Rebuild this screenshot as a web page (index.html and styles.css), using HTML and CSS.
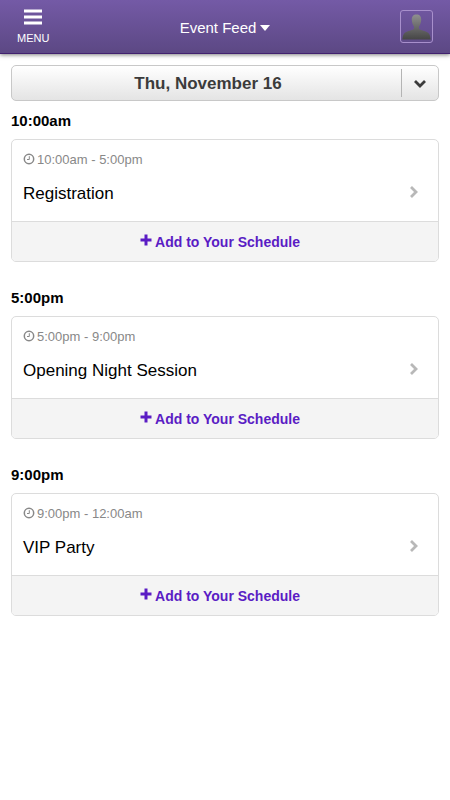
FILE: index.html
```html
<!DOCTYPE html>
<html lang="en">
<head>
<meta charset="utf-8">
<meta name="viewport" content="width=device-width, initial-scale=1">
<title>Event Feed</title>
<link rel="stylesheet" href="styles.css">
</head>
<body>
<svg class="sprite" aria-hidden="true">
  <symbol id="clock" viewBox="0 0 12 12">
    <circle cx="6" cy="6" r="4.7" fill="none" stroke="currentColor" stroke-width="1.5"/>
    <path d="M6.3 3.2V6.5H4" fill="none" stroke="currentColor" stroke-width="1"/>
  </symbol>
  <symbol id="plus" viewBox="0 0 12 12">
    <path d="M6 .5V11.5M.5 6H11.5" fill="none" stroke="currentColor" stroke-width="3"/>
  </symbol>
  <symbol id="chevron" viewBox="0 0 10 14">
    <path d="M2 2L7 7L2 12" fill="none" stroke="currentColor" stroke-width="2.8"/>
  </symbol>
</svg>

<header class="topbar">
  <button class="menu" type="button">
    <svg class="menu-icon" viewBox="0 0 18 16" aria-hidden="true">
      <path d="M0 2H18M0 8H18M0 14H18" stroke="#fff" stroke-width="3"/>
    </svg>
    <span>MENU</span>
  </button>
  <button class="feed" type="button">Event Feed
    <svg class="caret" viewBox="0 0 10 6" aria-hidden="true"><path d="M0 0H10L5 6Z" fill="#fff"/></svg>
  </button>
  <button class="profile" type="button" aria-label="Profile">
    <svg class="avatar" viewBox="0 0 29 29" aria-hidden="true">
      <defs>
        <linearGradient id="shade" x1="0" y1="3" x2="0" y2="28" gradientUnits="userSpaceOnUse">
          <stop offset="0" stop-color="#8e8e8e"/>
          <stop offset="1" stop-color="#444"/>
        </linearGradient>
      </defs>
      <path d="M14.5 2.500C11.300 2.500 9.600 4.500 9.800 8C10 10.800 10.800 13 12 14.500V16.500C11.500 18.500 4 18.500 1.800 22Q.3 24.200.3 27.500H28.700Q28.700 24.200 27.200 22C25 18.500 17.500 18.500 17 16.500V14.500C18.200 13 19 10.800 19.200 8C19.400 4.500 17.700 2.500 14.500 2.500Z" fill="url(#shade)"/>
    </svg>
  </button>
</header>

<main class="schedule">
  <div class="day">
    <select class="day-select" aria-label="Day">
      <option>Thu, November 16</option>
    </select>
    <span class="day-arrow">
      <svg viewBox="0 0 12 8" aria-hidden="true"><path d="M1 1L6 6L11 1" fill="none" stroke="#3b3b3b" stroke-width="2.800"/></svg>
    </span>
  </div>

  <section class="slot">
    <h2>10:00am</h2>
    <article class="card">
      <a class="event" href="#registration">
        <span class="details">
          <span class="time"><svg aria-hidden="true"><use href="#clock"/></svg>10:00am - 5:00pm</span>
          <span class="title">Registration</span>
        </span>
        <svg class="next" aria-hidden="true"><use href="#chevron"/></svg>
      </a>
      <button class="add" type="button"><svg aria-hidden="true"><use href="#plus"/></svg>Add to Your Schedule</button>
    </article>
  </section>

  <section class="slot">
    <h2>5:00pm</h2>
    <article class="card">
      <a class="event" href="#opening">
        <span class="details">
          <span class="time"><svg aria-hidden="true"><use href="#clock"/></svg>5:00pm - 9:00pm</span>
          <span class="title">Opening Night Session</span>
        </span>
        <svg class="next" aria-hidden="true"><use href="#chevron"/></svg>
      </a>
      <button class="add" type="button"><svg aria-hidden="true"><use href="#plus"/></svg>Add to Your Schedule</button>
    </article>
  </section>

  <section class="slot">
    <h2>9:00pm</h2>
    <article class="card">
      <a class="event" href="#party">
        <span class="details">
          <span class="time"><svg aria-hidden="true"><use href="#clock"/></svg>9:00pm - 12:00am</span>
          <span class="title">VIP Party</span>
        </span>
        <svg class="next" aria-hidden="true"><use href="#chevron"/></svg>
      </a>
      <button class="add" type="button"><svg aria-hidden="true"><use href="#plus"/></svg>Add to Your Schedule</button>
    </article>
  </section>
</main>
</body>
</html>
```
FILE: styles.css
```css
* {
  box-sizing: border-box;
}

body {
  margin: 0;
  background: #fff;
  color: #000;
  font-family: "Liberation Sans", Arial, sans-serif;
}

button {
  margin: 0;
  padding: 0;
  border: 0;
  background: none;
  color: inherit;
  font: inherit;
  cursor: pointer;
}

.sprite {
  display: none;
}

.topbar {
  display: grid;
  grid-template-columns: 1fr auto 1fr;
  align-items: center;
  height: 54px;
  padding: 0 17px;
  border-bottom: 1px solid #41216f;
  background: linear-gradient(#745aa6, #5c4884);
  box-shadow: 0 1px 4px rgba(0, 0, 0, 0.5);
  color: #fff;
  text-shadow: 0 -1px 0 #43257a;
}

.menu {
  display: flex;
  flex-direction: column;
  align-items: center;
  justify-self: start;
  gap: 7px;
  font-size: 11px;
  line-height: 12px;
}

.menu-icon {
  width: 18px;
  height: 16px;
}

.feed {
  display: flex;
  align-items: center;
  gap: 4px;
  padding-top: 3px;
  font-size: 15px;
  line-height: 20px;
}

.caret {
  width: 10px;
  height: 6px;
}

.profile {
  justify-self: end;
  width: 33px;
  height: 33px;
  border: 1px solid #a890cc;
  border-radius: 3px;
}

.avatar {
  display: block;
  width: 29px;
  height: 29px;
  margin: 0 auto;
}

.schedule {
  padding: 11px;
}

.day {
  position: relative;
  margin-bottom: 10px;
}

.day-select {
  display: block;
  width: 100%;
  height: 36px;
  padding: 1px 34px 0 0;
  appearance: none;
  border: 1px solid #c8c8c8;
  border-radius: 5px;
  background: linear-gradient(#fff, #e4e4e4);
  color: #3b3b3b;
  font: bold 17px/20px "Liberation Sans", Arial, sans-serif;
  text-align: center;
  text-align-last: center;
}

.day-arrow {
  position: absolute;
  top: 4px;
  right: 0;
  bottom: 4px;
  display: grid;
  place-items: center;
  width: 38px;
  padding: 2px 2px 0 0;
  border-left: 1px solid #b4b4b4;
  pointer-events: none;
}

.day-arrow svg {
  width: 12px;
  height: 8px;
}

.slot {
  margin-bottom: 26px;
}

.slot h2 {
  margin: 0 0 8px;
  font-size: 15px;
  line-height: 20px;
}

.card {
  overflow: hidden;
  border: 1px solid #dcdcdc;
  border-radius: 5px;
}

.event {
  display: flex;
  align-items: center;
  justify-content: space-between;
  padding: 12px 19px 17px 11px;
  color: inherit;
  text-decoration: none;
}

.details {
  display: flex;
  flex-direction: column;
  gap: 16px;
}

.time {
  display: flex;
  align-items: center;
  gap: 2px;
  color: #888;
  font-size: 13px;
  line-height: 16px;
}

.time svg {
  width: 12px;
  height: 12px;
  margin-bottom: 2px;
}

.title {
  font-size: 17px;
  line-height: 20px;
}

.next {
  align-self: flex-end;
  width: 10px;
  height: 14px;
  margin-bottom: 5px;
  color: #b8b8b8;
}

.add {
  display: flex;
  align-items: center;
  justify-content: center;
  gap: 3px;
  width: 100%;
  height: 40px;
  padding-right: 10px;
  border-top: 1px solid #dcdcdc;
  background: #f4f4f4;
  color: #5a1cc4;
  font-size: 14px;
  font-weight: bold;
  line-height: 16px;
}

.add svg {
  width: 12px;
  height: 12px;
  margin-bottom: 3px;
}
```
